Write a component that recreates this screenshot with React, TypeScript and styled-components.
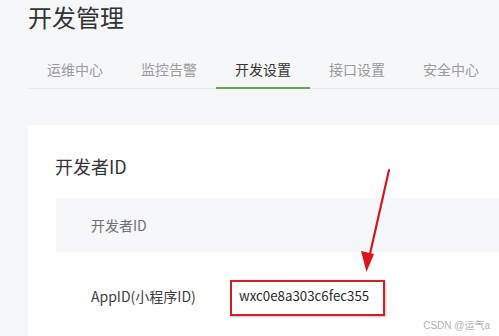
import React from "react";
import styled, { createGlobalStyle } from "styled-components";

const Global = createGlobalStyle`
  html, body { margin: 0; padding: 0; background: #f6f7f9; }
  body { font-family: "Noto Sans CJK SC", "Noto Sans", sans-serif; overflow: hidden; }
  * { box-sizing: border-box; }
`;

const Page = styled.div`
  position: relative;
  width: 499px;
  height: 336px;
  padding: 0 0 0 28px;
  overflow: hidden;
`;

const Title = styled.h1`
  margin: 0;
  height: 34px;
  font-size: 24px;
  line-height: 34px;
  font-weight: 400;
  color: #333;
`;

const Tabs = styled.div`
  display: flex;
  margin-top: 17px;
  border-bottom: 1px solid #e9eaec;
`;

const Tab = styled.div<{ $active?: boolean }>`
  width: 94px;
  flex: none;
  height: 38px;
  line-height: 36px;
  text-align: center;
  font-size: 14px;
  color: ${(p) => (p.$active ? "#353535" : "#9b9b9b")};
  border-bottom: 2px solid ${(p) => (p.$active ? "#62aa56" : "transparent")};
  margin-bottom: -1px;
`;

const Card = styled.div`
  margin-top: 36px;
  background: #fff;
  border-radius: 3px 0 0 0;
  padding: 24px 0 0 27px;
  height: 260px;
`;

const Heading = styled.h2`
  margin: 0;
  font-size: 18px;
  line-height: 34px;
  font-weight: 400;
  color: #333;
`;

const Table = styled.div`
  margin-top: 15px;
  margin-left: 1px;
`;

const HeadRow = styled.div`
  display: flex;
  align-items: center;
  height: 54px;
  background: #f6f7f9;
  padding-left: 35px;
  font-size: 14px;
  color: #707070;
`;

const Row = styled.div`
  display: flex;
  align-items: center;
  height: 88px;
  font-size: 14px;
  color: #404040;
`;

const Label = styled.div`
  width: 183px;
  flex: none;
  padding-left: 35px;
`;

const Value = styled.div`
  position: relative;
  color: #2a2a2a;
  font-size: 13.3px;
  line-height: 20px;
`;

const Highlight = styled.div`
  position: absolute;
  left: -9px;
  top: -6px;
  width: 155px;
  height: 36px;
  border: 2px solid #d21f24;
  box-shadow: 1px 1px 2px rgba(0, 0, 0, 0.25);
`;

const Arrow = styled.svg`
  position: absolute;
  left: 340px;
  top: 160px;
  overflow: visible;
`;

const Watermark = styled.div`
  position: absolute;
  right: 9px;
  bottom: 4px;
  font-size: 10px;
  color: #b3b3b3;
  font-family: "Liberation Sans", "Noto Sans CJK SC", sans-serif;
`;

const tabs = ["运维中心", "监控告警", "开发设置", "接口设置", "安全中心"];

export default function App() {
  return (
    <>
      <Global />
      <Page>
        <Title>开发管理</Title>
        <Tabs>
          {tabs.map((t) => (
            <Tab key={t} $active={t === "开发设置"}>
              {t}
            </Tab>
          ))}
        </Tabs>
        <Card>
          <Heading>开发者ID</Heading>
          <Table>
            <HeadRow>开发者ID</HeadRow>
            <Row>
              <Label>AppID(小程序ID)</Label>
              <Value>
                wxc0e8a303c6fec355
                <Highlight />
              </Value>
            </Row>
          </Table>
        </Card>
        <Arrow width="70" height="120" viewBox="0 0 70 120">
          <line x1="49" y1="10" x2="30" y2="94" stroke="#d8161b" strokeWidth="2.2" strokeLinecap="round" />
          <polygon points="26.5,112 21,91 34,94" fill="#d8161b" />
        </Arrow>
        <Watermark>CSDN @运气a</Watermark>
      </Page>
    </>
  );
}
